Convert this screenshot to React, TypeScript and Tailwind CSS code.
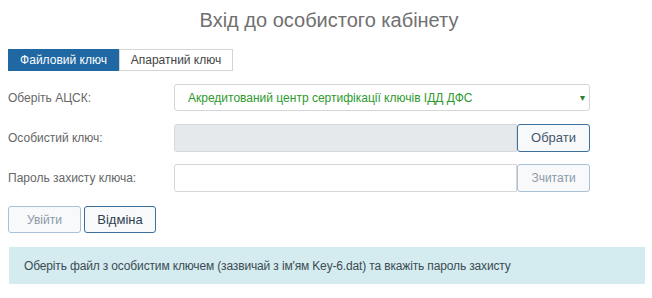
import React, { useState } from 'react';

// Форма входу до особистого кабінету (файловий ключ)
export default function App() {
  const [tab, setTab] = useState<'file' | 'hw'>('file');

  const labelCls = 'w-[166px] shrink-0 text-[12px] text-[#666]';

  return (
    <div
      className="w-[652px] h-[298px] bg-white overflow-hidden"
      style={{ fontFamily: '"Liberation Sans", Arial, sans-serif' }}
    >
      {/* заголовок */}
      <h1 className="pt-[7px] pl-[6px] text-center text-[20px] leading-[26px] text-[#707070] font-normal">
        Вхід до особистого кабінету
      </h1>

      <div className="pl-[8px] pr-[7px]">
        {/* вкладки */}
        <div className="mt-[16px] flex h-[22px]">
          <button
            onClick={() => setTab('file')}
            className={`w-[111px] text-[12px] leading-[20px] border ${
              tab === 'file' ? 'bg-[#1f68a3] border-[#1f68a3] text-white' : 'bg-white border-[#d5d5d5] text-[#444]'
            }`}
          >
            Файловий ключ
          </button>
          <button
            onClick={() => setTab('hw')}
            className={`w-[114px] text-[12px] leading-[20px] border ${
              tab === 'hw' ? 'bg-[#1f68a3] border-[#1f68a3] text-white' : 'bg-white border-[#d5d5d5] text-[#444]'
            }`}
          >
            Апаратний ключ
          </button>
        </div>

        {/* АЦСК */}
        <div className="mt-[13px] flex items-center h-[27px]">
          <div className={labelCls}>Оберіть АЦСК:</div>
          <div className="relative w-[416px] h-[27px] border border-[#d6d6d6] rounded-[3px] bg-white flex items-center pl-[13px]">
            <span className="text-[12px] text-[#2e9a2e]">Акредитований центр сертифікації ключів ІДД ДФС</span>
            <span className="absolute right-[4px] top-[8px] text-[10px] leading-none text-[#2a7d2a]">▾</span>
          </div>
        </div>

        {/* особистий ключ */}
        <div className="mt-[13px] flex items-center h-[28px]">
          <div className={labelCls}>Особистий ключ:</div>
          <div className="w-[343px] h-[28px] bg-[#e6e9ec] border border-[#d6d8da] rounded-l-[3px]" />
          <button className="w-[73px] h-[28px] border border-[#3d6f9e] rounded-[3px] bg-[#f7f9fb] text-[13px] text-[#46576a]">
            Обрати
          </button>
        </div>

        {/* пароль */}
        <div className="mt-[12px] flex items-center h-[28px]">
          <div className={labelCls}>Пароль захисту ключа:</div>
          <input
            type="password"
            className="w-[343px] h-[28px] bg-white border border-[#d6d6d6] rounded-l-[3px] outline-none px-2 text-[12px]"
          />
          <button className="w-[73px] h-[28px] border border-[#a9c0d6] rounded-[3px] bg-[#f7f9fb] text-[12px] text-[#8c9aa8]">
            Зчитати
          </button>
        </div>

        {/* кнопки */}
        <div className="mt-[14px] flex gap-[3px] h-[27px]">
          <button className="w-[73px] border border-[#a9c0d6] rounded-[3px] bg-[#f7f9fb] text-[12px] text-[#8c9aa8]">
            Увійти
          </button>
          <button className="w-[72px] border border-[#3d6f9e] rounded-[3px] bg-[#f7f9fb] text-[13px] text-[#2f3f50]">
            Відміна
          </button>
        </div>

        {/* підказка */}
        <div className="mt-[14px] ml-[1px] h-[37px] bg-[#d4ebf0] flex items-center pl-[15px]">
          <span className="text-[12px] tracking-[-0.15px] text-[#3d4b52]">
            Оберіть файл з особистим ключем (зазвичай з ім'ям Key-6.dat) та вкажіть пароль захисту
          </span>
        </div>
      </div>
    </div>
  );
}
